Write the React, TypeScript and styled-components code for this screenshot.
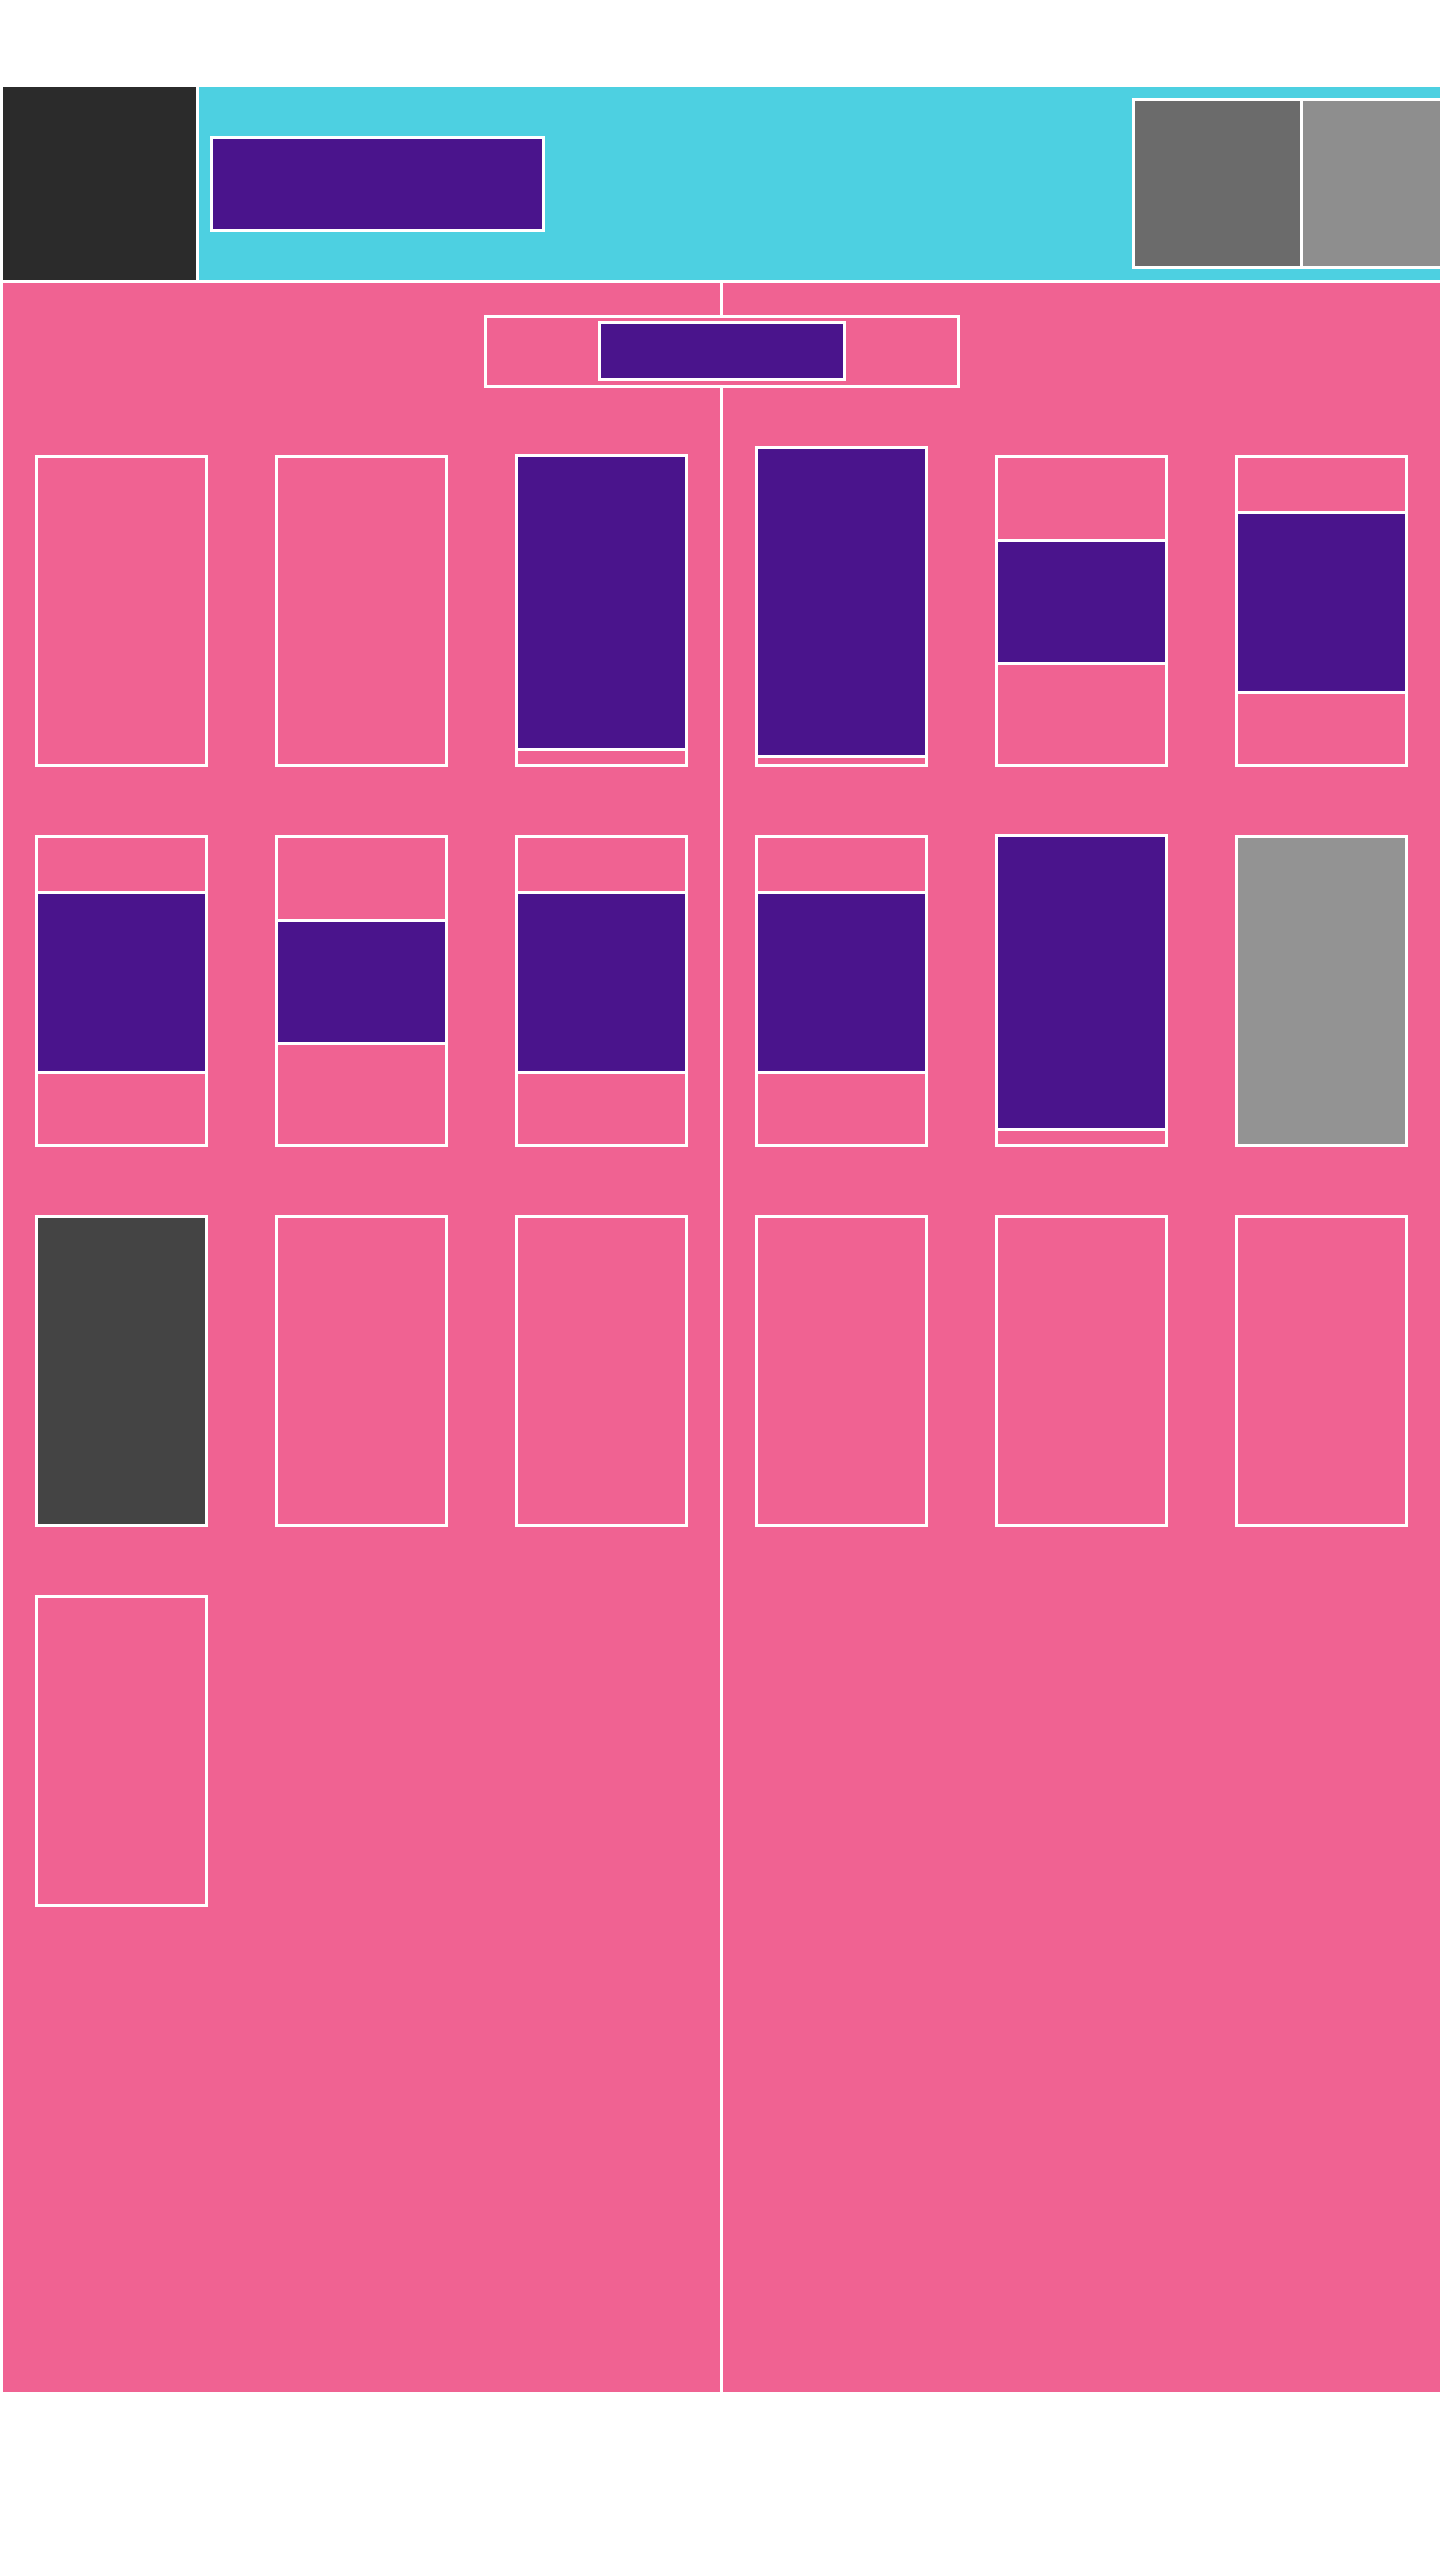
import React from "react";
import styled, { createGlobalStyle } from "styled-components";

const pink = "#f06292";
const purple = "#4a148c";

const GlobalStyle = createGlobalStyle`
  html, body {
    margin: 0;
    padding: 0;
    background: #fff;
  }
  body {
    font-family: "Liberation Sans", Arial, sans-serif;
    overflow-x: hidden;
  }
`;

const Page = styled.div`
  width: 1437px;
  padding: 87px 0 0 3px;
  display: flex;
  flex-direction: column;
  gap: 3px;
  overflow: hidden;
`;

// top bar
const Header = styled.header`
  display: flex;
  gap: 3px;
  height: 193px;
`;

const Logo = styled.div`
  width: 193px;
  flex-shrink: 0;
  background: #2b2b2b;
`;

const Bar = styled.div`
  flex: 1;
  min-width: 0;
  display: flex;
  align-items: center;
  padding: 0 11px;
  background: #4dd0e1;
  overflow: hidden;
`;

const TitleBlock = styled.div`
  width: 335px;
  height: 96px;
  box-sizing: border-box;
  flex-shrink: 0;
  border: 3px solid #fff;
  background: ${purple};
`;

const Swatches = styled.div`
  display: flex;
  gap: 3px;
  flex-shrink: 0;
  margin-left: auto;
  margin-right: -42px;
  border: 3px solid #fff;
  background: #fff;
`;

const Swatch = styled.div<{ $tone: string }>`
  width: 165px;
  height: 165px;
  background: ${(p) => p.$tone};
`;

// body
const Main = styled.main`
  display: grid;
  grid-template-columns: 717px 3px 717px;
  grid-template-rows: auto 1fr;
  height: 2109px;
  background: ${pink};
`;

const Divider = styled.div`
  grid-column: 2;
  grid-row: 1 / 3;
  background: #fff;
`;

const TabBar = styled.nav`
  grid-column: 1 / 4;
  grid-row: 1;
  justify-self: center;
  margin-top: 32px;
  width: 476px;
  height: 73px;
  box-sizing: border-box;
  padding-top: 3px;
  border: 3px solid #fff;
  background: ${pink};
  display: flex;
  justify-content: center;
  align-items: flex-start;
`;

const Tab = styled.div`
  width: 248px;
  height: 60px;
  box-sizing: border-box;
  border: 3px solid #fff;
  background: ${purple};
`;

const Half = styled.section<{ $col: number }>`
  grid-column: ${(p) => p.$col};
  grid-row: 2;
  display: grid;
  grid-template-columns: repeat(3, 173px);
  grid-auto-rows: 312px;
  column-gap: 67px;
  row-gap: 68px;
  padding: 67px 32px 0;
  align-content: start;
`;

const Card = styled.div<{ $fill?: string }>`
  box-sizing: border-box;
  height: 312px;
  padding-bottom: 18px;
  border: 3px solid #fff;
  background: ${(p) => p.$fill ?? "transparent"};
  display: flex;
  flex-direction: column;
  justify-content: center;
`;

const Block = styled.div<{ $h: number }>`
  flex-shrink: 0;
  height: ${(p) => p.$h}px;
  margin: 0 -3px;
  box-sizing: border-box;
  border: 3px solid #fff;
  background: ${purple};
`;

type Slot = number | "dark" | "gray" | null;

const leftCards: Slot[] = [null, null, 297, 183, 126, 183, "dark", null, null, null];
const rightCards: Slot[] = [312, 126, 183, 183, 297, "gray", null, null, null];

const fills: Record<string, string> = { dark: "#444444", gray: "#939393" };

const CardItem: React.FC<{ slot: Slot }> = ({ slot }) => {
  if (typeof slot === "number")
    return (
      <Card>
        <Block $h={slot} />
      </Card>
    );
  return <Card $fill={slot ? fills[slot] : undefined} />;
};

export default function App() {
  return (
    <>
      <GlobalStyle />
      <Page>
        <Header>
          <Logo />
          <Bar>
            <TitleBlock />
            <Swatches>
              <Swatch $tone="#6b6b6b" />
              <Swatch $tone="#8e8e8e" />
            </Swatches>
          </Bar>
        </Header>
        <Main>
          <Divider />
          <TabBar>
            <Tab />
          </TabBar>
          <Half $col={1}>
            {leftCards.map((s, i) => (
              <CardItem key={i} slot={s} />
            ))}
          </Half>
          <Half $col={3}>
            {rightCards.map((s, i) => (
              <CardItem key={i} slot={s} />
            ))}
          </Half>
        </Main>
      </Page>
    </>
  );
}
